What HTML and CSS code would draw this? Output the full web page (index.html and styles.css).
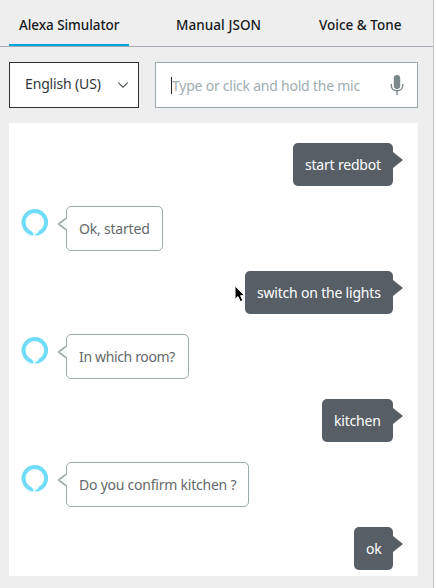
FILE: index.html
```
<!DOCTYPE html>
<html lang="en">
<head>
<meta charset="utf-8">
<title>Alexa Simulator</title>
<link rel="stylesheet" href="styles.css">
</head>
<body>
<svg class="defs" width="0" height="0">
  <symbol id="ring" viewBox="0 0 28 28"><circle cx="13.8" cy="14.3" r="11.3" fill="none" stroke="#6fdcfa" stroke-width="4"/><path fill="#fff" d="M12.5 28V26C12.5 24.9 11.8 24.3 10.6 23.7L10.8 22.5H18.5C17.3 24.3 15.7 25.7 13.8 26.7V28Z"/></symbol>
  <symbol id="tail" viewBox="0 0 10 14"><path fill="#fff" d="M10 .5 1.3 7 10 13.5"/><path fill="none" stroke="#9fadb0" stroke-width="1.7" d="M9.5 .8 1.6 7 9.5 13.2"/></symbol>
</svg>
<main class="simulator">
  <nav class="tabs">
    <a class="tab tab-alexa">Alexa Simulator</a>
    <a class="tab tab-json">Manual JSON</a>
    <a class="tab tab-voice">Voice &amp; Tone</a>
  </nav>
  <div class="controls">
    <div class="locale"><span>English (US)</span>
      <svg width="12" height="8" viewBox="0 0 12 8"><path fill="none" stroke="#4c5356" stroke-width="1.1" d="M1.3 1.7 6 6.2l4.7-4.5"/></svg>
    </div>
    <div class="utterance"><i class="caret"></i><span>Type or click and hold the mic</span>
      <svg width="14" height="22" viewBox="0 0 14 22"><rect x="3.8" y="1" width="6.4" height="14" rx="3.2" fill="#7b898a"/><path fill="none" stroke="#7b898a" stroke-width="1.4" d="M1.3 10v1.5c0 7 11.4 7 11.4 0V10M7 17v4"/></svg>
    </div>
  </div>
  <section class="chat">
    <div class="row user"><div class="bubble w-start">start redbot</div></div>
    <div class="row bot"><svg class="ring"><use href="#ring"/></svg><div class="bubble w-ok"><svg class="tail"><use href="#tail"/></svg>Ok, started</div></div>
    <div class="row user"><div class="bubble w-switch">switch on the lights</div></div>
    <div class="row bot"><svg class="ring"><use href="#ring"/></svg><div class="bubble w-room"><svg class="tail"><use href="#tail"/></svg>In which room?</div></div>
    <div class="row user"><div class="bubble w-kitchen">kitchen</div></div>
    <div class="row bot"><svg class="ring"><use href="#ring"/></svg><div class="bubble w-confirm"><svg class="tail"><use href="#tail"/></svg>Do you confirm kitchen ?</div></div>
    <div class="row user"><div class="bubble w-last">ok</div></div>
  </section>
</main>
<svg class="pointer" width="14" height="20" viewBox="0 0 14 20"><path fill="#000" stroke="#fff" stroke-width="1" d="M1 .8V14.3l3-2.7 2.3 5 2.6-1.1-2.3-4.8H10.8Z"/></svg>
</body>
</html>
```
FILE: styles.css
```
* { box-sizing: border-box; }
body {
  margin: 0;
  height: 588px;
  overflow: hidden;
  background: #fff;
  font: 14px/20px "Noto Sans", sans-serif;
  letter-spacing: -0.2px;
  white-space: nowrap;
}
.defs { position: absolute; }
.simulator {
  width: 434px;
  height: 588px;
  background: #eee;
  border-right: 1px solid #c8c8c8;
}
.tabs {
  display: flex;
  height: 47px;
  padding-left: 9px;
  border-bottom: 1px solid #a4a8b5;
  color: #16191c;
  font-weight: 500;
  font-size: 13.5px;
  letter-spacing: 0;
}
.tab { height: 46px; padding-top: 15px; }
.tab-alexa { width: 120px; padding-left: 10px; border-bottom: 2px solid #04a4de; letter-spacing: -0.06px; }
.tab-json { width: 142px; padding-left: 47px; letter-spacing: 0.07px; }
.tab-voice { padding-left: 48px; }
.controls { display: flex; gap: 16px; padding: 15px 0 15px 9px; }
.locale, .utterance {
  display: flex;
  align-items: center;
  height: 46px;
  background: #fff;
}
.locale {
  width: 130px;
  padding: 0 9px 0 15px;
  justify-content: space-between;
  border: 1px solid #2b3032;
  color: #31373a;
  letter-spacing: -0.15px;
}
.locale span { margin-top: -2px; }
.utterance {
  width: 263px;
  padding: 0 13px 0 15px;
  border: 1px solid #98aaad;
  color: #a0adaf;
  letter-spacing: -0.23px;
}
.utterance span { margin-top: 2px; }
.utterance svg { margin-left: auto; }
.caret { width: 1px; height: 17px; background: #222; }
.chat {
  display: flex;
  flex-direction: column;
  gap: 20px;
  width: 409px;
  height: 453px;
  margin-left: 9px;
  padding: 20px 25px 0 12px;
  background: #fff;
}
.row { display: flex; }
.user { justify-content: flex-end; height: 43px; }
.bot { height: 45px; }
.bubble { position: relative; border-radius: 5px; }
.user .bubble {
  padding: 12px 0 11px 12px;
  background: #575e66;
  color: #fff;
}
.user .bubble::after {
  content: "";
  position: absolute;
  left: 100%;
  top: 9px;
  border: 8px solid transparent;
  border-left: 10px solid #575e66;
  border-right: 0;
}
.bot .bubble {
  margin-left: 17px;
  padding: 12px 0 11px 12px;
  border: 1px solid #9aaaad;
  color: #65696b;
}
.ring { width: 28px; height: 28px; margin-top: 2px; }
.tail { position: absolute; left: -10px; top: 10px; width: 10px; height: 14px; }
.w-start { width: 100px; }
.w-ok { width: 97px; }
.w-switch { width: 148px; }
.w-room { width: 123px; }
.bot .w-room { letter-spacing: -0.35px; }
.w-kitchen { width: 71px; }
.w-confirm { width: 183px; }
.bot .w-confirm { letter-spacing: -0.23px; }
.w-last { width: 39px; }
.pointer { position: absolute; left: 234px; top: 285px; }
```
